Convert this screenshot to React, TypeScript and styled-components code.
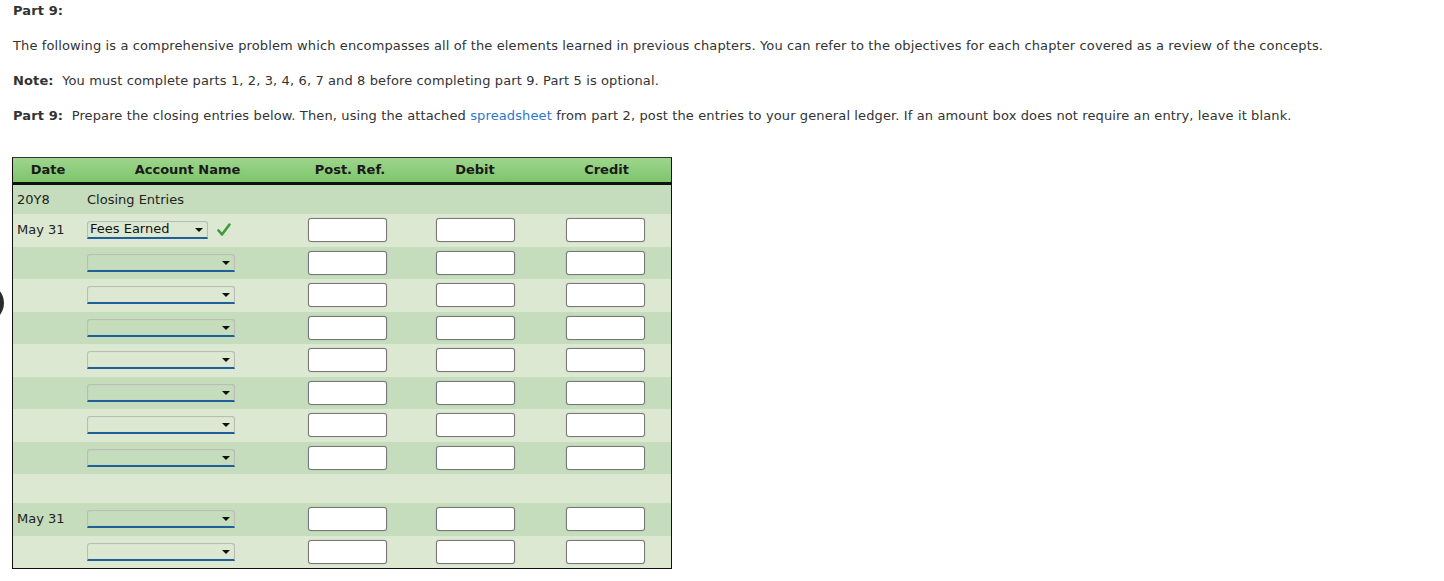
import React from "react";
import styled, { createGlobalStyle } from "styled-components";

const GlobalStyle = createGlobalStyle`
  html, body {
    margin: 0;
    padding: 0;
    background: #fff;
  }
  body {
    font-family: "DejaVu Sans", Verdana, sans-serif;
    font-size: 13px;
    color: #333;
  }
`;

const Page = styled.div`
  position: relative;
  padding: 1px 13px 0;
  width: 1444px;
  height: 581px;
  box-sizing: border-box;
  overflow: hidden;
`;

const Para = styled.p`
  margin: 0 0 15px;
  line-height: 20px;
  letter-spacing: 0.12px;
`;

const Label = styled.b`
  font-weight: bold;
  color: #333;
`;

const Link = styled.a`
  color: #2a78cc;
  text-decoration: none;
`;

const Table = styled.div`
  margin: 31px 0 0 -1px;
  width: 660px;
  border: 1px solid #111;
  border-top-color: #333;
  box-sizing: border-box;
`;

const columns = "70px 209px 116px 134px 129px";

const HeadRow = styled.div`
  display: grid;
  grid-template-columns: ${columns};
  height: 24px;
  align-items: center;
  background: linear-gradient(#9dd58c, #7ec56c);
  border-bottom: 3px solid #111;
`;

const HeadCell = styled.div`
  text-align: center;
  font-weight: bold;
  color: #1a1a1a;
  margin-top: -2px;
`;

const Row = styled.div<{ $dark?: boolean; $h: number }>`
  display: grid;
  grid-template-columns: ${columns};
  align-items: center;
  height: ${({ $h }) => $h}px;
  background: ${({ $dark }) => ($dark ? "#c5dcbd" : "#dde8d3")};
  color: #222;
`;

const TextCell = styled.div`
  padding-left: 4px;
  white-space: nowrap;
  margin-top: -1px;
`;

const AccountCell = styled.div`
  padding-left: 4px;
  display: flex;
  align-items: center;
  gap: 9px;
`;

const InputCell = styled.div<{ $shift?: number }>`
  display: flex;
  justify-content: center;
  margin-left: ${({ $shift }) => $shift || 0}px;
`;

const Dropdown = styled.div<{ $w: number }>`
  position: relative;
  width: ${({ $w }) => $w}px;
  height: 18px;
  box-sizing: border-box;
  border: 1px solid #b9bdb6;
  border-bottom: 2px solid #1f5f9a;
  border-radius: 3px 3px 0 0;
  box-shadow: inset 0 0 1px rgba(0, 0, 0, 0.12);
  padding: 0 2px;
  line-height: 14px;
  color: #111;
  white-space: nowrap;

  &::after {
    content: "";
    position: absolute;
    right: 4px;
    top: 6px;
    border-left: 4px solid transparent;
    border-right: 4px solid transparent;
    border-top: 4px solid #111;
  }
`;

const Check = styled.svg`
  width: 14px;
  height: 14px;
  display: block;
`;

const AmountBox = styled.div`
  width: 79px;
  height: 24px;
  box-sizing: border-box;
  background: #fff;
  border: 1px solid #777;
  border-radius: 3px;
  box-shadow: 0 0 1px rgba(0, 0, 0, 0.35);
`;

const EdgeKnob = styled.div`
  position: absolute;
  left: -34px;
  top: 284px;
  width: 38px;
  height: 38px;
  border-radius: 50%;
  background: #2b2b2b;
`;

function Amounts() {
  return (
    <>
      <InputCell $shift={-5}>
        <AmountBox />
      </InputCell>
      <InputCell>
        <AmountBox />
      </InputCell>
      <InputCell $shift={-3}>
        <AmountBox />
      </InputCell>
    </>
  );
}

type EntryProps = {
  date?: string;
  dark?: boolean;
  value?: string;
};

function EntryRow({ date, dark, value }: EntryProps) {
  return (
    <Row $dark={dark} $h={32.5}>
      <TextCell>{date}</TextCell>
      <AccountCell>
        {value ? (
          <>
            <Dropdown $w={121}>{value}</Dropdown>
            <Check viewBox="0 0 14 14">
              <path
                d="M1.5 7.5 L5 11.5 L12.5 1.5"
                fill="none"
                stroke="#3d9b3d"
                strokeWidth="2.6"
                strokeLinecap="round"
                strokeLinejoin="round"
              />
            </Check>
          </>
        ) : (
          <Dropdown $w={148} />
        )}
      </AccountCell>
      <Amounts />
    </Row>
  );
}

export default function App() {
  const emptyRows = [true, false, true, false, true, false, true];
  return (
    <Page>
      <GlobalStyle />
      <EdgeKnob />
      <Para>
        <Label>Part 9:</Label>
      </Para>
      <Para>
        The following is a comprehensive problem which encompasses all of the elements learned in previous chapters. You
        can refer to the objectives for each chapter covered as a review of the concepts.
      </Para>
      <Para>
        <Label>Note:</Label>&nbsp; You must complete parts 1, 2, 3, 4, 6, 7 and 8 before completing part 9. Part 5 is
        optional.
      </Para>
      <Para>
        <Label>Part 9:</Label>&nbsp; Prepare the closing entries below. Then, using the attached{" "}
        <Link href="#">spreadsheet</Link> from part 2, post the entries to your general ledger. If an amount box does
        not require an entry, leave it blank.
      </Para>

      <Table>
        <HeadRow>
          <HeadCell>Date</HeadCell>
          <HeadCell>Account Name</HeadCell>
          <HeadCell>Post. Ref.</HeadCell>
          <HeadCell>Debit</HeadCell>
          <HeadCell>Credit</HeadCell>
        </HeadRow>
        <Row $dark $h={29}>
          <TextCell>20Y8</TextCell>
          <TextCell>Closing Entries</TextCell>
        </Row>
        <EntryRow date="May 31" value="Fees Earned" />
        {emptyRows.map((dark, i) => (
          <EntryRow key={i} dark={dark} />
        ))}
        <Row $h={29} />
        <EntryRow date="May 31" dark />
        <EntryRow />
      </Table>
    </Page>
  );
}
